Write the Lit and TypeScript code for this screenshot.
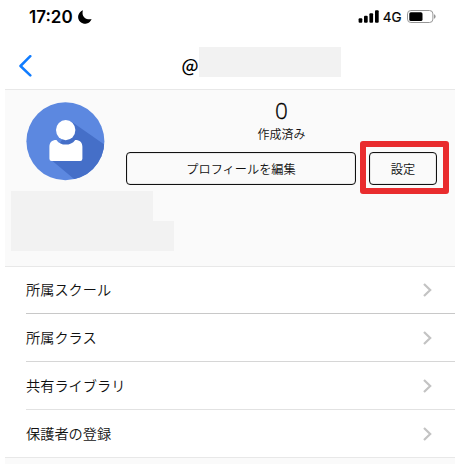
import { LitElement, html, css } from "lit";
import { customElement } from "lit/decorators.js";

@customElement("status-bar")
class StatusBar extends LitElement {
  static styles = css`
    :host { display: flex; height: 33px; padding: 0 19px 0 24px; justify-content: space-between; align-items: center; font-family: Inter, "Liberation Sans", sans-serif; color: #000; }
    .side { display: flex; align-items: center; }
    .time { font-size: 17px; font-weight: 600; line-height: 33px; margin-top: 1px; }
    .moon { margin-left: 4px; }
    .net { font-size: 13.5px; font-weight: 400; margin: 1px 5px 0 4px; -webkit-text-stroke: 0.2px #000; }
    svg { display: block; }
  `;
  render() {
    return html`
      <div class="side">
        <span class="time">17:20</span>
        <svg class="moon" width="15" height="14" viewBox="0 0 15 14"><path d="M6 .3A6.9 6.9 0 1 0 14.6 9C9.8 10.6 3.8 6.5 6 .3Z" /></svg>
      </div>
      <div class="side">
        <svg width="21" height="13" viewBox="0 0 21 13">
          <rect x="0.6" y="8.2" width="3.7" height="4.6" rx="1" />
          <rect x="6" y="5.8" width="3.7" height="7" rx="1" />
          <rect x="11.4" y="3.2" width="3.7" height="9.6" rx="1" />
          <rect x="17" y="0.2" width="3.7" height="12.6" rx="1" />
        </svg>
        <span class="net">4G</span>
        <svg width="29" height="13" viewBox="0 0 29 13">
          <rect x=".5" y=".5" width="25.4" height="12" rx="3.4" fill="none" stroke="#969696" />
          <rect x="2.3" y="2.2" width="13.2" height="8.8" rx="1.6" />
          <path d="M27 4.3q1.6.5 1.6 2.2T27 8.7Z" fill="#969696" />
        </svg>
      </div>
    `;
  }
}

@customElement("user-avatar")
class UserAvatar extends LitElement {
  static styles = css`
    :host { display: block; width: 79px; height: 79px; }
    svg { display: block; }
  `;
  render() {
    return html`<svg width="79" height="79" viewBox="-0.4 -0.3 79 79">
      <defs><clipPath id="disc"><circle cx="39" cy="39" r="39" /></clipPath></defs>
      <circle cx="39" cy="39" r="39" fill="#5c88e0" />
      <path d="M46 20 82 45V82H54L24 57Z" fill="#456fc8" clip-path="url(#disc)" />
      <path d="M30 37.6C32.4 41 35.5 42.3 39.3 42.3S46.4 41 48.8 37.6C53.5 37.6 56 40.3 56 44.5V56.5Q56 58.7 53.8 58.7H25.2Q23 58.7 23 56.5V44.5C23 40.3 25.4 37.6 30 37.6Z" fill="#fff" />
      <ellipse cx="39.3" cy="27.8" rx="9.7" ry="10.1" fill="#fff" />
    </svg>`;
  }
}

@customElement("menu-row")
class MenuRow extends LitElement {
  static styles = css`
    :host { box-sizing: border-box; display: flex; height: 48px; margin-left: 21px; padding: 0 22.5px 1px 0; align-items: center; justify-content: space-between; border-bottom: 1px solid #c8c8c8; font-size: 14.2px; line-height: 20px; }
    svg { display: block; margin-top: 1px; }
  `;
  render() {
    return html`<slot></slot>
      <svg width="9" height="14" viewBox="0 0 9 14"><path d="M1 1 7.2 7 1 13" fill="none" stroke="#c3c3c3" stroke-width="2.2" /></svg>`;
  }
}

@customElement("app-root")
class AppRoot extends LitElement {
  static styles = css`
    :host { display: block; height: 464px; overflow: hidden; background: #fff; color: #111; font-family: "Noto Sans CJK JP", sans-serif; font-weight: 350; }
    .screen { width: 449.5px; height: 464px; margin-left: 5px; display: flex; flex-direction: column; }
    status-bar { flex: none; }
    .nav { height: 56px; flex: none; display: flex; padding-left: 14px; }
    .back { margin-top: 22px; display: block; }
    .handle { margin: 20px 0 0 148.5px; font-size: 17.5px; line-height: 24px; font-weight: 500; width: 17.5px; color: #000; }
    .mask { background: #f2f2f2; }
    .name { width: 142px; height: 30px; margin-top: 14px; }
    .profile { box-sizing: border-box; height: 178px; flex: none; background: #fafafa; border: solid #e8e8e8; border-width: 1px 0; }
    .top { display: flex; height: 101px; padding-left: 21px; }
    user-avatar { margin-top: 12px; }
    .info { margin-left: 21px; width: 311px; }
    .count { text-align: center; height: 62px; }
    .number { font-family: "Open Sans", sans-serif; font-size: 22.5px; line-height: 24px; padding-top: 9px; font-weight: 300; color: #000; -webkit-text-stroke: 0.35px #000; }
    .label { font-size: 12px; line-height: 18px; margin-top: 2px; }
    .actions { display: flex; justify-content: space-between; }
    .button { box-sizing: border-box; height: 33px; border: 1px solid #111; box-shadow: inset 0 0 0 .5px #d8d8d8; border-radius: 4px; display: flex; align-items: center; justify-content: center; font-size: 12.2px; }
    .edit { width: 230px; }
    .settings { width: 68px; position: relative; }
    .ring { position: absolute; inset: -12px -13px -10px -10px; border: 6px solid #e92c2e; border-radius: 3px; }
    .line1 { width: 142px; height: 30px; margin-left: 6px; }
    .line2 { width: 162.5px; height: 30px; margin-left: 6px; }
    .first { height: 47px; padding-bottom: 2px; }
    .soft { border-bottom-color: #d6d6d6; }
    .softer { border-bottom-color: #e2e2e2; }
    .last { border-bottom-color: transparent; }
    .footer { margin-top: -1px; border-top: 1px solid #e8e8e8; background: #fafafa; flex: 1; }
  `;
  render() {
    return html`<div class="screen">
      <status-bar></status-bar>
      <div class="nav">
        <svg class="back" width="14" height="22" viewBox="0 0 14 22"><path d="M11.3 1.2 1.5 11 11.3 20.4" fill="none" stroke="#107cff" stroke-width="2.5" stroke-linecap="round" stroke-linejoin="round" /></svg>
        <div class="handle">@</div>
        <div class="mask name"></div>
      </div>
      <section class="profile">
        <div class="top">
          <user-avatar></user-avatar>
          <div class="info">
            <div class="count"><div class="number">0</div><div class="label">作成済み</div></div>
            <div class="actions">
              <div class="button edit">プロフィールを編集</div>
              <div class="button settings">設定<div class="ring"></div></div>
            </div>
          </div>
        </div>
        <div class="mask line1"></div>
        <div class="mask line2"></div>
      </section>
      <menu-row class="first">所属スクール</menu-row>
      <menu-row class="soft">所属クラス</menu-row>
      <menu-row class="softer">共有ライブラリ</menu-row>
      <menu-row class="last">保護者の登録</menu-row>
      <div class="footer"></div>
    </div>`;
  }
}
